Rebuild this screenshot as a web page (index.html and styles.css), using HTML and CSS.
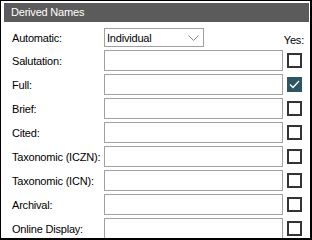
FILE: index.html
```html
<!DOCTYPE html>
<html lang="en">
<head>
    <meta charset="UTF-8" />
    <title>Derived Names</title>
    <link rel="stylesheet" href="styles.css">
</head>
<body>
    <div class="panel">
        <div class="panel-title">Derived Names</div>

        <div class="name-grid">
            <label class="field-label">Automatic:</label>
            <div class="select-box">
                <span>Individual</span>
                <svg class="chevron" width="11" height="6" viewBox="0 0 11 6">
                    <polyline points="0.5,0.5 5.5,5.5 10.5,0.5" fill="none" stroke="#8a8a8a" stroke-width="1"/>
                </svg>
            </div>
            <span class="yes-label">Yes:</span>

            <label class="field-label">Salutation:</label>
            <input class="text-box" type="text">
            <span class="check-box"></span>

            <label class="field-label">Full:</label>
            <input class="text-box" type="text">
            <span class="check-box checked">
                <svg width="11" height="11" viewBox="0 0 11 11">
                    <polyline points="1,5.5 4,8.5 10,2" fill="none" stroke="#fff" stroke-width="1.3"/>
                </svg>
            </span>

            <label class="field-label">Brief:</label>
            <input class="text-box" type="text">
            <span class="check-box"></span>

            <label class="field-label">Cited:</label>
            <input class="text-box" type="text">
            <span class="check-box"></span>

            <label class="field-label">Taxonomic (ICZN):</label>
            <input class="text-box" type="text">
            <span class="check-box"></span>

            <label class="field-label">Taxonomic (ICN):</label>
            <input class="text-box" type="text">
            <span class="check-box"></span>

            <label class="field-label">Archival:</label>
            <input class="text-box" type="text">
            <span class="check-box"></span>

            <label class="field-label">Online Display:</label>
            <input class="text-box" type="text">
            <span class="check-box"></span>
        </div>
    </div>
</body>
</html>
```

FILE: styles.css
```css
* {
    margin: 0;
    padding: 0;
    box-sizing: border-box;
}

body {
    font-family: 'Liberation Sans', Arial, sans-serif;
    font-size: 11px;
    letter-spacing: -0.2px;
    color: #000;
    background: #fff;
}

.panel {
    width: 312px;
    height: 240px;
    border: 1px solid #000;
    border-right-width: 2px;
    border-bottom-width: 2px;
    padding: 2px 1px 0 3px;
    overflow: hidden;
    background: #fff;
}

.panel-title {
    height: 19px;
    line-height: 19px;
    padding-left: 7px;
    background: #5b5b5b;
    color: #fff;
}

.name-grid {
    display: grid;
    grid-template-columns: 88px 179px 15px;
    column-gap: 4px;
    row-gap: 3px;
    grid-auto-rows: 21px;
    grid-template-rows: 19px;
    margin-top: 6px;
    padding-left: 8px;
}

.field-label {
    align-self: center;
    white-space: nowrap;
}

.select-box {
    width: 100px;
    height: 19px;
    border: 1px solid #a0a0a0;
    display: flex;
    align-items: center;
    justify-content: space-between;
    padding: 0 4px 0 2px;
}

.chevron {
    display: block;
}

.yes-label {
    align-self: end;
    justify-self: end;
    margin-right: -2px;
    margin-bottom: 1px;
    white-space: nowrap;
}

.text-box {
    width: 179px;
    height: 21px;
    border: 1px solid #a0a0a0;
    outline: none;
    background: #fff;
}

.check-box {
    width: 15px;
    height: 15px;
    align-self: center;
    border: 2px solid #333;
    background: #fff;
    display: flex;
    align-items: center;
    justify-content: center;
}

.check-box.checked {
    background: #2d5662;
    border-color: #2d5662;
}

.check-box svg {
    display: block;
}
```
